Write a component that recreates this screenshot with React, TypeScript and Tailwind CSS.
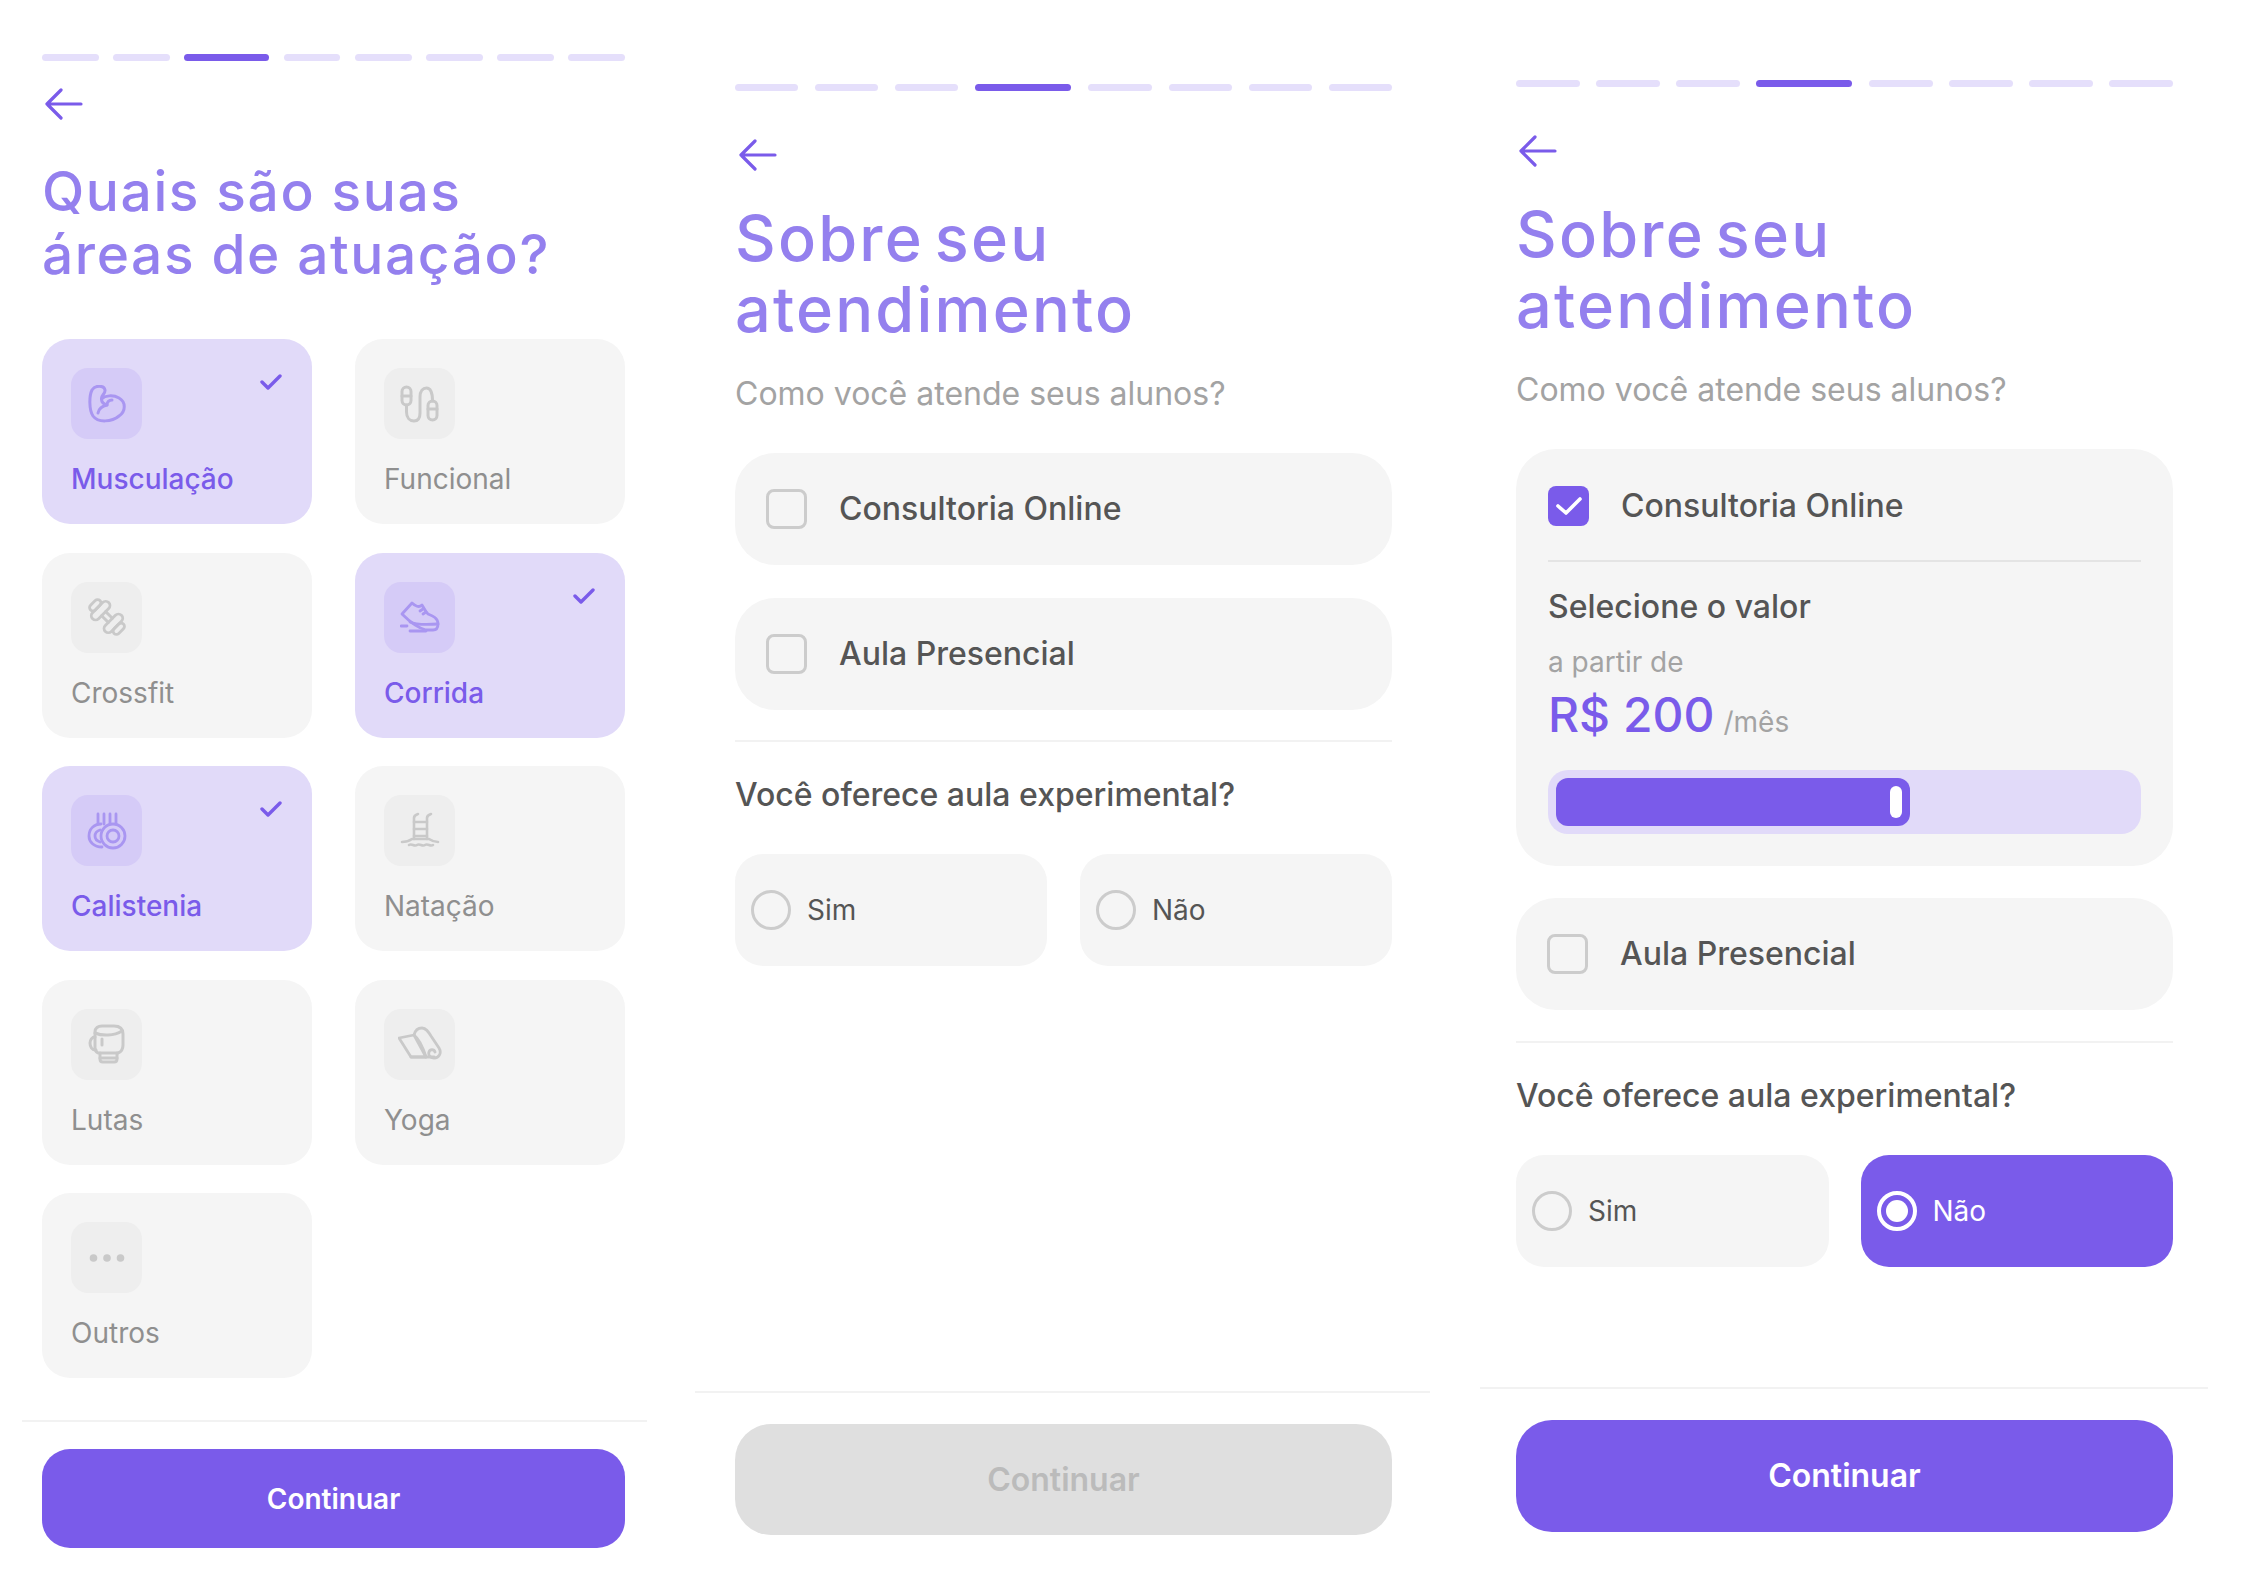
import React from "react";

const FONT = "font-['Inter','Liberation_Sans',sans-serif]";

type IconProps = { c: string };

const Bicep = ({ c }: IconProps) => (
  <svg width="40" height="38" viewBox="0 0 40 38" fill="none" stroke={c} strokeWidth="3" strokeLinecap="round" strokeLinejoin="round">
    <path d="M6 31C2 25 2 11 5 5C8 0 17 0 18 5C18.5 9 14 10 14.5 14C18 10.5 26 9.5 32 13C39 17 39 26 32 31C25 37 11 38 6 31Z" />
    <path d="M11 28C12 23 15 21 20 20" />
    <path d="M14.5 14C14.5 17 16 19 20 20C20 17 22 15 25 15" />
  </svg>
);
const Rope = ({ c }: IconProps) => (
  <svg width="40" height="38" viewBox="0 0 40 38" fill="none" stroke={c} strokeWidth="3" strokeLinecap="round" strokeLinejoin="round">
    <rect x="2" y="2" width="9" height="18" rx="4.5" />
    <path d="M2 11H11" />
    <rect x="28" y="16" width="9" height="19" rx="4.5" />
    <path d="M28 24H37" />
    <path d="M6.5 20V27C6.5 33 10 36 14 36C18 36 20 33 20 28V12C20 6 23 3 26.5 3C30 3 32.5 7 32.5 16" />
  </svg>
);
const Barbell = ({ c }: IconProps) => (
  <svg width="40" height="38" viewBox="0 0 40 40" fill="none" stroke={c} strokeWidth="3" strokeLinecap="round" strokeLinejoin="round">
    <g transform="rotate(45 20 20)">
      <rect x="-1" y="13" width="7" height="14" rx="3.5" />
      <rect x="6" y="8" width="9" height="24" rx="4.5" />
      <path d="M15 17H25M15 23H25" />
      <rect x="25" y="8" width="9" height="24" rx="4.5" />
      <rect x="34" y="13" width="7" height="14" rx="3.5" />
    </g>
  </svg>
);
const Shoe = ({ c }: IconProps) => (
  <svg width="40" height="32" viewBox="0 0 40 32" fill="none" stroke={c} strokeWidth="2.8" strokeLinecap="round" strokeLinejoin="round">
    <path d="M2 13L12 2C15 5 19 7 22 4C24 7 25 10 28 13C33 15 38 17 38 23C38 27 36 29 33 29H26C18 27 10 21 2 13Z" />
    <path d="M10 21C16 24 24 24 38 23" />
    <path d="M20 10L23 8M23 13L26 11" />
    <path d="M1 25H7M10 30H26" />
  </svg>
);
const Rings = ({ c }: IconProps) => (
  <svg width="40" height="38" viewBox="0 0 40 38" fill="none" stroke={c} strokeWidth="2.8" strokeLinecap="round" strokeLinejoin="round">
    <circle cx="26" cy="24" r="12" />
    <circle cx="26" cy="24" r="6" />
    <path d="M15 35C7 35 2 30 2 24C2 17 7 12 14 12" />
    <path d="M13 30C10 29 8 27 8 24C8 21 10 19 13 18" />
    <path d="M11 2V12M17 2V12M23 2V12M29 2V12" />
  </svg>
);
const Ladder = ({ c }: IconProps) => (
  <svg width="40" height="38" viewBox="0 0 40 38" fill="none" stroke={c} strokeWidth="2.6" strokeLinecap="round" strokeLinejoin="round">
    <path d="M14 27V6C14 4 15 3 18 2" />
    <path d="M27 27V6C27 4 28 3 31 2" />
    <path d="M14 10H27M14 17H27M14 24H27" />
    <path d="M2 30C6 30 9 29 12 27H29C32 29 35 30 38 30" />
    <path d="M9 33C12 31 14 35 17 33C20 31 22 35 25 33C28 31 30 35 33 33" />
  </svg>
);
const Glove = ({ c }: IconProps) => (
  <svg width="38" height="40" viewBox="0 0 38 40" fill="none" stroke={c} strokeWidth="3" strokeLinecap="round" strokeLinejoin="round">
    <path d="M10 29C8 28 7 26 7 24V8C7 4 10 2 14 2H26C32 2 35 5 35 10V21C35 25 33 28 30 29Z" />
    <path d="M7 13C4 13 2 16 2 19C2 23 4 26 8 26" />
    <path d="M7 9C14 12 26 12 34 7" />
    <path d="M14 15V21" />
    <path d="M12 29V35C12 37 13 38 15 38H26C28 38 29 37 29 35V29" />
    <path d="M12 34H29" />
  </svg>
);
const Mat = ({ c }: IconProps) => (
  <svg width="44" height="36" viewBox="0 0 44 36" fill="none" stroke={c} strokeWidth="2.8" strokeLinecap="round" strokeLinejoin="round">
    <path d="M1 12L16 9L28 31H13Z" />
    <path d="M16 9C17 5 20 2 24 2C28 2 30 5 33 10L41 22C44 27 41 32 36 32C32 32 30 29 31 26C32 23 36 23 37 26" />
    <path d="M13 31H36" />
    <path d="M16 9C20 12 24 18 28 31" />
  </svg>
);
const Dots = ({ c }: IconProps) => (
  <svg width="36" height="10" viewBox="0 0 36 10" fill={c}>
    <circle cx="4.5" cy="5" r="3.8" />
    <circle cx="18" cy="5" r="3.8" />
    <circle cx="31.5" cy="5" r="3.8" />
  </svg>
);

const ArrowBack = () => (
  <svg width="38" height="32" viewBox="0 0 38 32" fill="none" stroke="#7A5BEA" strokeWidth="3.2" strokeLinecap="round" strokeLinejoin="round" className="block">
    <path d="M36 16H2M16 2L2 16L16 30" />
  </svg>
);

const Progress = ({ active, activeW, gap }: { active: number; activeW: string; gap: string }) => (
  <div className={`flex ${gap}`}>
    {Array.from({ length: 8 }).map((_, i) => (
      <div key={i} className={i === active ? `${activeW} h-[7px] shrink-0 rounded-full bg-[#7A5BEA]` : "h-[7px] flex-1 rounded-full bg-[#E5DFFB]"} />
    ))}
  </div>
);

const AreaCard = ({ label, icon: Icon, on }: { label: string; icon: React.FC<IconProps>; on?: boolean }) => (
  <div className={`relative h-[185px] rounded-[28px] pl-[29px] pt-[29px] ${on ? "bg-[#E1DAF9]" : "bg-[#F5F5F5]"}`}>
    <div className={`flex h-[71px] w-[71px] items-center justify-center rounded-[17px] ${on ? "bg-[#D5CBF7]" : "bg-[#EEEEEE]"}`}>
      <Icon c={on ? "#A996F1" : "#C9C9C9"} />
    </div>
    <div className={`mt-[20px] text-[28px] leading-[40px] ${on ? "font-medium text-[#7A5BEA]" : "text-[#8F8F8F]"}`}>{label}</div>
    {on && (
      <svg width="22" height="16" viewBox="0 0 22 16" fill="none" stroke="#7A5BEA" strokeWidth="3.4" strokeLinecap="round" strokeLinejoin="round" className="absolute right-[30px] top-[35px]">
        <path d="M2 8L8 14L20 2" />
      </svg>
    )}
  </div>
);

const Box = ({ checked }: { checked?: boolean }) =>
  checked ? (
    <div className="flex h-[40px] w-[41px] shrink-0 items-center justify-center rounded-[8px] bg-[#7A5BEA]">
      <svg width="28" height="22" viewBox="0 0 28 22" fill="none" stroke="#fff" strokeWidth="3.6" strokeLinecap="round" strokeLinejoin="round">
        <path d="M3 11L11 18L25 4" />
      </svg>
    </div>
  ) : (
    <div className="h-[40px] w-[41px] shrink-0 rounded-[8px] border-[3px] border-[#CCCCCC]" />
  );

const Option = ({ label }: { label: string }) => (
  <div className="flex h-[112px] items-center gap-[32px] rounded-[40px] bg-[#F5F5F5] pl-[31px]">
    <Box />
    <span className="text-[32px] font-medium leading-[40px] text-[#555555]">{label}</span>
  </div>
);

const Radio = ({ label, on }: { label: string; on?: boolean }) => (
  <div className={`flex h-[112px] flex-1 items-center gap-[16px] rounded-[28px] pl-[16px] ${on ? "bg-[#7A5BEA]" : "bg-[#F5F5F5]"}`}>
    {on ? (
      <div className="flex h-[40px] w-[40px] items-center justify-center rounded-full border-[4px] border-white">
        <div className="h-[22px] w-[22px] rounded-full bg-white" />
      </div>
    ) : (
      <div className="h-[40px] w-[40px] rounded-full border-[3px] border-[#CCCCCC]" />
    )}
    <span className={`text-[28px] leading-[40px] ${on ? "text-white" : "text-[#555555]"}`}>{label}</span>
  </div>
);

const Heading = () => (
  <h1 className="text-[63px] font-medium leading-[71px] tracking-[2.2px] text-[#9480EE] [word-spacing:-8px]">
    Sobre seu
    <br />
    atendimento
  </h1>
);

const Question = () => (
  <div className="mt-[33px] text-[32px] font-medium leading-[40px] text-[#555555]">Você oferece aula experimental?</div>
);

const Thin = () => <div className="h-[2px] bg-[#F2F2F2]" />;

export default function App() {
  return (
    <div className={`flex h-[1578px] w-[2242px] overflow-hidden bg-white ${FONT}`}>
      {/* Tela 1 */}
      <section className="ml-[22px] flex w-[625px] flex-col">
        <div className="pl-[20px] pr-[22px] pt-[54px]">
          <Progress active={2} activeW="w-[85px]" gap="gap-[14.6px]" />
          <div className="mt-[27px] pl-[3px]">
            <ArrowBack />
          </div>
          <h1 className="mt-[40px] text-[55px] font-medium leading-[63px] tracking-[1.6px] text-[#9480EE]">
            Quais são suas
            <br />
            áreas de atuação?
          </h1>
          <div className="mt-[53px] grid grid-cols-2 gap-x-[43px] gap-y-[28.5px]">
            <AreaCard label="Musculação" icon={Bicep} on />
            <AreaCard label="Funcional" icon={Rope} />
            <AreaCard label="Crossfit" icon={Barbell} />
            <AreaCard label="Corrida" icon={Shoe} on />
            <AreaCard label="Calistenia" icon={Rings} on />
            <AreaCard label="Natação" icon={Ladder} />
            <AreaCard label="Lutas" icon={Glove} />
            <AreaCard label="Yoga" icon={Mat} />
            <AreaCard label="Outros" icon={Dots} />
          </div>
        </div>
        <div className="mt-[42px]">
          <Thin />
        </div>
        <div className="pl-[20px] pr-[22px] pt-[27px]">
          <button className="h-[99px] w-full rounded-[28px] bg-[#7A5BEA] text-[28px] font-semibold text-white">Continuar</button>
        </div>
      </section>

      {/* Tela 2 */}
      <section className="ml-[48px] flex w-[735px] flex-col">
        <div className="pl-[40px] pr-[38px] pt-[84px]">
          <Progress active={3} activeW="w-[96px]" gap="gap-[17px]" />
          <div className="mt-[48px] pl-[4px]">
            <ArrowBack />
          </div>
          <div className="mt-[32px]">
            <Heading />
          </div>
          <p className="mt-[29px] text-[32px] leading-[40px] text-[#A3A3A3]">Como você atende seus alunos?</p>
          <div className="mt-[39px] flex flex-col gap-[33px]">
            <Option label="Consultoria Online" />
            <Option label="Aula Presencial" />
          </div>
          <div className="mt-[30px]">
            <Thin />
          </div>
          <Question />
          <div className="mt-[39px] flex gap-[33px]">
            <Radio label="Sim" />
            <Radio label="Não" />
          </div>
        </div>
        <div className="mt-auto">
          <Thin />
        </div>
        <div className="pb-[43px] pl-[40px] pr-[38px] pt-[31px]">
          <button className="h-[111px] w-full rounded-[36px] bg-[#DFDFDF] text-[32px] font-semibold text-[#BBBBBB]">Continuar</button>
        </div>
      </section>

      {/* Tela 3 */}
      <section className="ml-[50px] flex w-[728px] flex-col">
        <div className="pl-[36px] pr-[35px] pt-[80px]">
          <Progress active={3} activeW="w-[96px]" gap="gap-[16.5px]" />
          <div className="mt-[48px] pl-[3px]">
            <ArrowBack />
          </div>
          <div className="mt-[32px]">
            <Heading />
          </div>
          <p className="mt-[29px] text-[32px] leading-[40px] text-[#A3A3A3]">Como você atende seus alunos?</p>
          <div className="mt-[39px] rounded-[40px] bg-[#F5F5F5] px-[32px] pb-[32px] pt-[37px]">
            <div className="flex items-center gap-[32px]">
              <Box checked />
              <span className="text-[32px] font-medium leading-[40px] text-[#555555]">Consultoria Online</span>
            </div>
            <div className="mt-[34px] h-[2px] bg-[#E4E4E4]" />
            <div className="mt-[25px] text-[32px] font-medium leading-[40px] text-[#555555]">Selecione o valor</div>
            <div className="mt-[17px] text-[28px] leading-[36px] text-[#A3A3A3]">a partir de</div>
            <div className="mt-[7px] flex items-baseline gap-[9px] leading-[56px]">
              <span className="text-[48px] font-medium text-[#7A5BEA]">R$ 200</span>
              <span className="text-[28px] text-[#A3A3A3]">/mês</span>
            </div>
            <div className="mt-[20px] flex h-[64px] items-center rounded-[20px] bg-[#E1DAF9] pl-[8px]">
              <div className="flex h-[48px] w-[354px] items-center justify-end rounded-[12px] bg-[#7A5BEA] pr-[8px]">
                <div className="h-[32px] w-[12px] rounded-full bg-white" />
              </div>
            </div>
          </div>
          <div className="mt-[32px]">
            <Option label="Aula Presencial" />
          </div>
          <div className="mt-[31px]">
            <Thin />
          </div>
          <Question />
          <div className="mt-[39px] flex gap-[32px]">
            <Radio label="Sim" />
            <Radio label="Não" on />
          </div>
        </div>
        <div className="mt-auto">
          <Thin />
        </div>
        <div className="pb-[46px] pl-[36px] pr-[35px] pt-[31px]">
          <button className="h-[112px] w-full rounded-[36px] bg-[#7A5BEA] text-[32px] font-semibold text-white">Continuar</button>
        </div>
      </section>
    </div>
  );
}
